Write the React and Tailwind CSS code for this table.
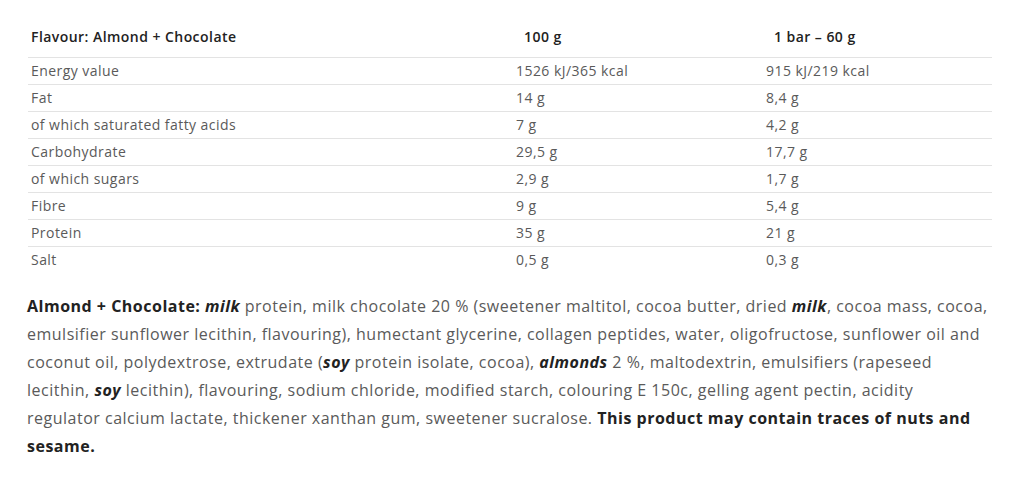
const rows = [
  ["Energy value", "1526 kJ/365 kcal", "915 kJ/219 kcal"],
  ["Fat", "14 g", "8,4 g"],
  ["of which saturated fatty acids", "7 g", "4,2 g"],
  ["Carbohydrate", "29,5 g", "17,7 g"],
  ["of which sugars", "2,9 g", "1,7 g"],
  ["Fibre", "9 g", "5,4 g"],
  ["Protein", "35 g", "21 g"],
  ["Salt", "0,5 g", "0,3 g"],
];

const Allergen = ({ children }) => (
  <em className="font-bold italic text-[#222]">{children}</em>
);

export default function App() {
  return (
    <div
      className="min-h-screen bg-white pl-[28px] pr-[32px] pt-[17px]"
      style={{ fontFamily: '"Open Sans", "Liberation Sans", sans-serif' }}
    >
      <table className="w-full border-collapse text-left text-[14px] tracking-[0.45px]">
        <thead>
          <tr className="h-[40px] border-b border-[#e3e3e3] text-[#222]">
            <th className="w-[485px] pl-[3px] font-semibold">Flavour: Almond + Chocolate</th>
            <th className="w-[250px] pl-[11px] font-semibold">100 g</th>
            <th className="pl-[11px] font-semibold">1 bar – 60 g</th>
          </tr>
        </thead>
        <tbody>
          {rows.map((r) => (
            <tr key={r[0]} className="h-[27px] border-b border-[#e3e3e3] text-[#5a5a5a] last:border-b-0">
              <td className="pl-[3px]">{r[0]}</td>
              <td className="pl-[3px]">{r[1]}</td>
              <td className="pl-[3px]">{r[2]}</td>
            </tr>
          ))}
        </tbody>
      </table>

      <p className="mt-[19px] w-[961px] -ml-px text-[16px] leading-[28px] tracking-[0.5px] text-[#5a5a5a]">
        <strong className="font-bold text-[#222]">Almond + Chocolate: </strong>
        <Allergen>milk</Allergen> protein, milk chocolate 20 % (sweetener maltitol, cocoa butter, dried{" "}
        <Allergen>milk</Allergen>, cocoa mass, cocoa, emulsifier sunflower lecithin, flavouring), humectant
        glycerine, collagen peptides, water, oligofructose, sunflower oil and coconut oil, polydextrose,
        extrudate (<Allergen>soy</Allergen> protein isolate, cocoa), <Allergen>almonds</Allergen> 2 %,
        maltodextrin, emulsifiers (rapeseed lecithin, <Allergen>soy</Allergen> lecithin), flavouring, sodium
        chloride, modified starch, colouring E 150c, gelling agent pectin, acidity regulator calcium lactate,
        thickener xanthan gum, sweetener sucralose.{" "}
        <strong className="font-bold text-[#222]">This product may contain traces of nuts and sesame.</strong>
      </p>
    </div>
  );
}
